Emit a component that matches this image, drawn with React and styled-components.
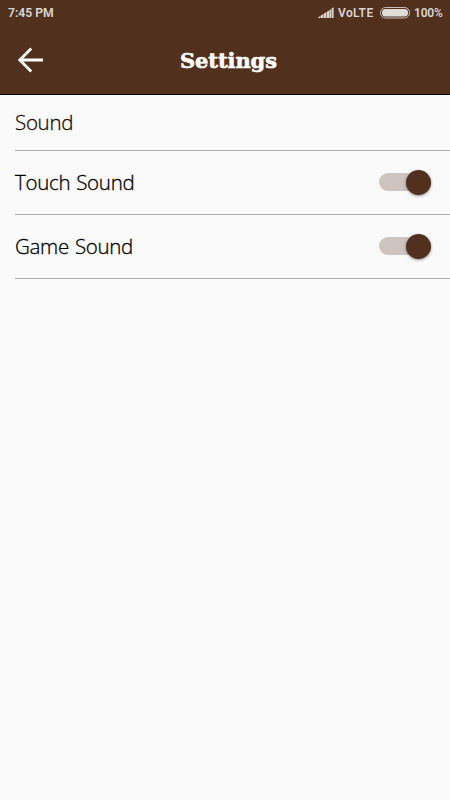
import React, { useState } from "react";
import styled, { createGlobalStyle } from "styled-components";

const GlobalStyle = createGlobalStyle`
   * {
      box-sizing: border-box;
   }

   body {
      margin: 0;
      background-color: #fafafa;
      font-family: "Open Sans", "Noto Sans", sans-serif;
   }

   button {
      padding: 0;
      border: none;
      background: none;
   }
`;

const Screen = styled.div`
   min-height: 100vh;
   background-color: #fafafa;
`;

const Top = styled.header`
   height: 95px;
   background-color: #51301e;
   border-bottom: 1px solid #000;
`;

const StatusBar = styled.div`
   display: flex;
   justify-content: space-between;
   align-items: center;
   height: 26px;
   padding: 0 8px;
   color: #dcd6d2;
   font-family: Roboto, sans-serif;
   font-size: 12px;
   font-weight: 600;
   line-height: 26px;
`;

const Time = styled.span`
   font-size: 12.2px;
`;

const StatusIcons = styled.div`
   display: flex;
   align-items: center;
`;

const Network = styled.span`
   width: 37px;
   margin: 0 5px 0 4px;
   letter-spacing: 0.4px;
`;

const Percent = styled.span`
   width: 28px;
   margin-left: 4px;
   letter-spacing: -0.2px;
`;

const NavBar = styled.div`
   display: grid;
   grid-template-columns: 60px 1fr 60px;
   align-items: center;
   height: 68px;
`;

const Back = styled.button`
   display: flex;
   padding-left: 17px;
`;

const Title = styled.h1`
   margin: 2px 0 0 7px;
   color: #fff;
   font-family: "DejaVu Serif", serif;
   font-size: 21px;
   font-weight: 700;
   letter-spacing: -0.1px;
   line-height: 28px;
   text-align: center;
   -webkit-text-stroke: 0.6px #fff;
`;

const List = styled.main`
   padding-left: 15px;
`;

const Row = styled.div`
   display: flex;
   justify-content: space-between;
   align-items: center;
   height: ${({ $small }) => ($small ? 56 : 64)}px;
   padding-right: 19px;
   border-bottom: 1px solid #aaa;
   color: ${({ $small }) => ($small ? "#210b07" : "#000")};
   font-size: 20.5px;
   font-weight: 300;
   letter-spacing: -0.3px;
   word-spacing: 1px;
   line-height: 28px;
   -webkit-text-stroke: 0.3px currentColor;
`;

const Label = styled.span`
   padding-bottom: 1px;
`;

const Track = styled.button`
   display: flex;
   align-items: center;
   justify-content: ${({ $on }) => ($on ? "flex-end" : "flex-start")};
   width: 52px;
   height: 18px;
   margin-bottom: 1px;
   border-radius: 9px;
   background-color: #cdc4bf;
`;

const Thumb = styled.span`
   width: 25px;
   height: 25px;
   flex: none;
   border-radius: 50%;
   background-color: #51301e;
   box-shadow: 0 1px 3px rgba(0, 0, 0, 0.45);
`;

const Toggle = ({ label }) => {
   const [on, setOn] = useState(true);

   return (
      <Track $on={on} role="switch" aria-checked={on} aria-label={label} onClick={() => setOn(!on)}>
         <Thumb />
      </Track>
   );
};

const Signal = () => (
   <svg width="17" height="12" viewBox="0 0 17 12" fill="#dcd6d2">
      <path d="M1 11V10.5L3.4 9V11ZM3.8 11V8.5L6.2 7V11ZM6.7 11V6.8L9.1 5.3V11ZM9.6 11V5L12 3.6V11ZM12.4 11V3.2L14 2.3V11ZM14.5 11V1.4L16.6 .3V11Z" />
   </svg>
);

const Battery = () => (
   <svg width="30" height="12" viewBox="0 0 30 12">
      <rect x=".5" y=".5" width="29" height="10.5" rx="5" fill="none" stroke="#c9beb8" />
      <rect x="2" y="2" width="26" height="7.5" rx="3.5" fill="#e2dcd8" />
   </svg>
);

const Arrow = () => (
   <svg width="27" height="26" viewBox="0 0 27 26" fill="none" stroke="#fff" strokeWidth="2.8">
      <path d="M14.2 1.5L2.8 13L14.2 24.5M3 13H26" />
   </svg>
);

const App = () => {
   return (
      <Screen>
         <GlobalStyle />
         <Top>
            <StatusBar>
               <Time>7:45 PM</Time>
               <StatusIcons>
                  <Signal />
                  <Network>VoLTE</Network>
                  <Battery />
                  <Percent>100%</Percent>
               </StatusIcons>
            </StatusBar>
            <NavBar>
               <Back aria-label="Back">
                  <Arrow />
               </Back>
               <Title>Settings</Title>
            </NavBar>
         </Top>
         <List>
            <Row $small>
               <Label>Sound</Label>
            </Row>
            <Row>
               <Label>Touch Sound</Label>
               <Toggle label="Touch Sound" />
            </Row>
            <Row>
               <Label>Game Sound</Label>
               <Toggle label="Game Sound" />
            </Row>
         </List>
      </Screen>
   );
};

export default App;
